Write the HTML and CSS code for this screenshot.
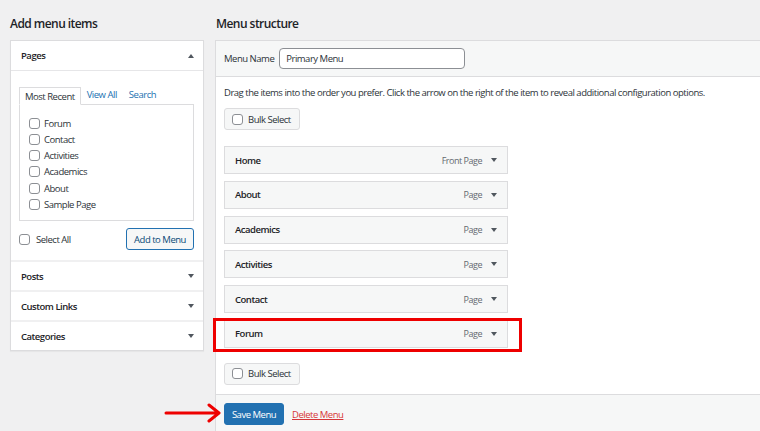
FILE: index.html
```html
<!DOCTYPE html>
<html>
<head>
<meta charset="utf-8">
<link rel="stylesheet" href="styles.css">
</head>
<body>
<div class="page">
  <div class="col-left">
    <h2 class="title">Add menu items</h2>
    <div class="side">
      <div class="acc-head open"><span>Pages</span><span class="tri up"></span></div>
      <div class="acc-body">
        <div class="tabs">
          <span class="tab active">Most Recent</span>
          <span class="tab">View All</span>
          <span class="tab">Search</span>
        </div>
        <div class="tabbox">
          <label class="chk"><span class="box"></span>Forum</label>
          <label class="chk"><span class="box"></span>Contact</label>
          <label class="chk"><span class="box"></span>Activities</label>
          <label class="chk"><span class="box"></span>Academics</label>
          <label class="chk"><span class="box"></span>About</label>
          <label class="chk"><span class="box"></span>Sample Page</label>
        </div>
        <div class="add-row">
          <label class="chk sel"><span class="box"></span>Select All</label>
          <span class="btn-outline">Add to Menu</span>
        </div>
      </div>
      <div class="acc-head"><span>Posts</span><span class="tri down"></span></div>
      <div class="acc-head"><span>Custom Links</span><span class="tri down"></span></div>
      <div class="acc-head"><span>Categories</span><span class="tri down"></span></div>
    </div>
  </div>
  <div class="col-right">
    <h2 class="title">Menu structure</h2>
    <div class="main">
      <div class="main-head">
        <span class="lbl">Menu Name</span>
        <span class="input">Primary Menu</span>
      </div>
      <div class="main-body">
        <p class="hint">Drag the items into the order you prefer. Click the arrow on the right of the item to reveal additional configuration options.</p>
        <span class="bulk"><span class="box"></span>Bulk Select</span>
        <ul class="items">
          <li class="item"><b>Home</b><span class="type">Front Page</span><span class="tri down"></span></li>
          <li class="item"><b>About</b><span class="type">Page</span><span class="tri down"></span></li>
          <li class="item"><b>Academics</b><span class="type">Page</span><span class="tri down"></span></li>
          <li class="item"><b>Activities</b><span class="type">Page</span><span class="tri down"></span></li>
          <li class="item"><b>Contact</b><span class="type">Page</span><span class="tri down"></span></li>
          <li class="item hl"><b>Forum</b><span class="type">Page</span><span class="tri down"></span><span class="redbox"></span></li>
        </ul>
        <span class="bulk"><span class="box"></span>Bulk Select</span>
      </div>
      <div class="main-foot">
        <svg class="arrow" width="60" height="20" viewBox="0 0 60 20"><path d="M2 10 H54 M45 2 L55 10 L45 18" fill="none" stroke="#ee0000" stroke-width="3" stroke-linecap="round" stroke-linejoin="round"/></svg>
        <span class="btn-primary">Save Menu</span>
        <span class="del">Delete Menu</span>
      </div>
    </div>
  </div>
</div>
</body>
</html>
```

FILE: styles.css
```css
* { box-sizing: border-box; }
html, body { margin: 0; padding: 0; }
body {
  background: #f0f0f1;
  font-family: "Open Sans", "Noto Sans", sans-serif;
  font-size: 9.5px;
  letter-spacing: -0.48px;
  color: #2c3338;
  width: 760px;
  height: 431px;
  overflow: hidden;
}
.page {
  display: flex;
  gap: 11px;
  padding-left: 10px;
}
.col-left { width: 194px; flex: none; }
.col-right { width: 560px; flex: none; }
.title {
  margin: 0;
  font-size: 12px;
  font-weight: 600;
  color: #1d2327;
  height: 40px;
  line-height: 16px;
  padding-top: 16px;
  letter-spacing: -0.55px;
}
.col-right .title { padding-left: 1px; }

/* left */
.side {
  background: #fff;
  border: 1px solid #dcdcde;
  box-shadow: 0 1px 1px rgba(0,0,0,.04);
}
.acc-head {
  height: 30px;
  display: flex;
  align-items: center;
  justify-content: space-between;
  padding: 0 9px 0 10px;
  font-weight: 600;
  font-size: 9.5px;
  color: #1d2327;
  border-top: 2px solid #f0f0f1;
}
.acc-head.open { border-top: 0; height: 30px; border-bottom: 1px solid #e6e6e8; }
.tri {
  width: 0; height: 0;
  border-left: 3.5px solid transparent;
  border-right: 3.5px solid transparent;
}
.tri.up { border-bottom: 4px solid #50575e; }
.tri.down { border-top: 4px solid #50575e; }
.acc-body { padding: 15px 9px 10px 8px; }
.tabs { display: flex; height: 18px; align-items: flex-end; }
.tab {
  color: #2271b1;
  padding: 0 6px;
  height: 18px;
  line-height: 17px;
}
.tab.active {
  color: #2c3338;
  border: 1px solid #dcdcde;
  border-bottom: 1px solid #fff;
  background: #fff;
  padding: 0 5px;
  position: relative;
  z-index: 1;
  margin-bottom: -1px;
}
.tabbox {
  border: 1px solid #dcdcde;
  height: 117px;
  padding: 12px 9px 0;
  display: flex;
  flex-direction: column;
  gap: 4.3px;
}
.chk { display: flex; align-items: center; gap: 4px; height: 12px; color: #2c3338; }
.box {
  width: 11px; height: 11px;
  border: 1px solid #8c8f94;
  border-radius: 3px;
  background: #fff;
  flex: none;
}
.add-row {
  display: flex;
  justify-content: space-between;
  align-items: center;
  margin-top: 7px;
}
.chk.sel { gap: 6px; }
.btn-outline {
  border: 1px solid #2271b1;
  border-radius: 3px;
  background: #f6f7f7;
  color: #0a4b78;
  height: 22px;
  width: 68px;
  display: flex;
  align-items: center;
  justify-content: center;
}

/* right */
.main {
  background: #fff;
  border: 1px solid #dcdcde;
  border-right: 0;
  height: 400px;
  display: flex;
  flex-direction: column;
}
.main-head {
  background: #f6f7f7;
  border-bottom: 1px solid #dcdcde;
  height: 36px;
  display: flex;
  align-items: center;
  padding-left: 8px;
  gap: 5px;
}
.lbl { color: #2c3338; }
.input {
  width: 186px;
  height: 21px;
  border: 1px solid #8c8f94;
  border-radius: 4px;
  background: #fff;
  padding-left: 6px;
  line-height: 19px;
  color: #2c3338;
}
.main-body { padding: 0 8px 9px; flex: none; }
.hint { margin: 8px 0 0; line-height: 15px; height: 15px; white-space: nowrap; }
.bulk {
  display: inline-flex;
  align-items: center;
  gap: 5px;
  height: 22px;
  padding: 0 8px 0 7px;
  white-space: nowrap;
  background: #f6f7f7;
  border: 1px solid #dcdcde;
  border-radius: 3px;
  margin-top: 8px;
}
.items { list-style: none; margin: 16px 0 0; padding: 0; display: flex; flex-direction: column; gap: 6.8px; width: 284px; margin-bottom: 7px; }
.item {
  position: relative;
  height: 28px;
  background: #f6f7f7;
  border: 1px solid #dcdcde;
  display: flex;
  align-items: center;
  padding: 0 10px 0 10px;
}
.item b { font-weight: 600; color: #1d2327; flex: 1; }
.type { color: #646970; font-size: 9px; margin-right: 9px; }
.redbox {
  position: absolute;
  left: -12px; top: -3px;
  width: 309px; height: 34px;
  border: 3px solid #ee0000;
}
.main-foot {
  position: relative;
  background: #f6f7f7;
  border-top: 1px solid #dcdcde;
  height: 40px;
  display: flex;
  align-items: center;
  padding-left: 8px;
  gap: 8px;
}
.btn-primary {
  background: #2271b1;
  border: 1px solid #2271b1;
  border-radius: 3px;
  color: #fff;
  height: 22px;
  width: 60px;
  display: flex;
  align-items: center;
  justify-content: center;
}
.del { color: #d63638; text-decoration: underline; }
.arrow { position: absolute; left: -52px; top: 8px; }
```
